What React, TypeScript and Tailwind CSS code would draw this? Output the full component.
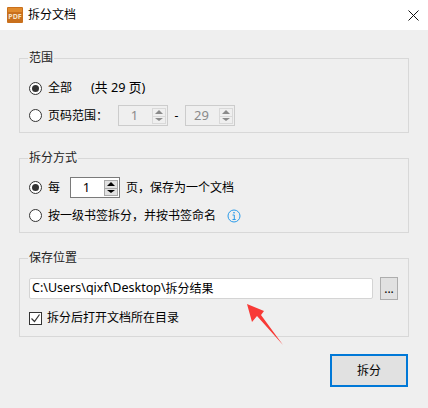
import React from 'react';

const FONT = "font-['Noto_Sans','Noto_Sans_CJK_SC',sans-serif]";
const COMMA = '\uFF0C';
const COLON = '\uFF1A';

const Radio = ({ checked }: { checked?: boolean }) => (
  <span className="flex h-[13px] w-[13px] shrink-0 items-center justify-center rounded-full border border-[#333] bg-white">
    {checked && <span className="h-[7px] w-[7px] rounded-full bg-[#333]" />}
  </span>
);

const Spinner = ({ value, disabled }: { value: string; disabled?: boolean }) => {
  const box = disabled ? 'border-[#ccc] bg-[#efefef] text-[#8a8a8a]' : 'border-[#7a7a7a] bg-white text-black';
  const btn = disabled ? 'border-[#d9d9d9] text-[#8a8a8a]' : 'border-[#a8a8a8] bg-[#e1e1e1] text-black';
  return (
    <div className={`flex h-[21px] w-[50px] items-center border pr-[1px] ${box}`}>
      <span className="flex-1 pr-[2px] text-center text-[13px] leading-none">{value}</span>
      <div className="flex w-[14px] flex-col">
        <span className={`flex h-[9px] items-center justify-center border ${btn}`}>
          <span className="h-0 w-0 border-x-[4px] border-b-[4px] border-x-transparent border-b-current" />
        </span>
        <span className={`-mt-px flex h-[8px] items-center justify-center border ${btn}`}>
          <span className="h-0 w-0 border-x-[4px] border-t-[3px] border-x-transparent border-t-current" />
        </span>
      </div>
    </div>
  );
};

const Group = ({ title, className, children }: { title: string; className: string; children: React.ReactNode }) => (
  <fieldset className={`mx-[19px] border border-[#d8d8d8] px-[9px] ${className}`}>
    <legend className="ml-[-1px] bg-[#efefef] px-[1px] text-[12px] leading-[16px] text-[#222]">{title}</legend>
    {children}
  </fieldset>
);

export default function App() {
  return (
    <div className={`relative flex h-[408px] w-[428px] flex-col overflow-hidden bg-[#efefef] text-[12px] text-black ${FONT}`}>
      {/* title bar */}
      <div className="flex h-[30px] items-center bg-white pl-[7px] pr-[9px]">
        <svg width="16" height="16" viewBox="0 0 16 16" className="shrink-0">
          <rect width="16" height="16" rx="1" fill="#c9701c" />
          <rect x="1" y="1" width="14" height="4" fill="#e08a2c" />
          <text x="8" y="12" textAnchor="middle" fontSize="7" fontWeight="700" fill="#f6e2c8">PDF</text>
        </svg>
        <span className="ml-[5px] flex-1 text-[12px]">拆分文档</span>
        <svg width="11" height="11" viewBox="0 0 11 11">
          <path d="M.5.5l10 10M10.5.5l-10 10" stroke="#111" strokeWidth="1" fill="none" />
        </svg>
      </div>

      <Group title="范围" className="mt-[20px] h-[83px]">
        <div className="mt-[12px] flex h-[20px] items-center gap-[6px]">
          <Radio checked />
          <span className="w-[37px]">全部</span>
          <span className="text-[12.75px]">(共 29 页)</span>
        </div>
        <div className="mt-[7px] flex h-[21px] items-center">
          <Radio />
          <span className="ml-[6px] w-[70px]">页码范围{COLON}</span>
          <Spinner value="1" disabled />
          <span className="w-[17px] text-center">-</span>
          <Spinner value="29" disabled />
        </div>
      </Group>

      <Group title="拆分方式" className="mt-[17px] h-[83px]">
        <div className="mt-[11px] flex h-[21px] items-center">
          <Radio checked />
          <span className="ml-[6px] w-[22px]">每</span>
          <Spinner value="1" />
          <span className="ml-[6px]">页{COMMA}保存为一个文档</span>
        </div>
        <div className="mt-[7px] flex h-[21px] items-center">
          <Radio />
          <span className="ml-[6px]">按一级书签拆分{COMMA}并按书签命名</span>
          <svg width="14" height="14" viewBox="0 0 14 14" className="ml-[11px]">
            <circle cx="7" cy="7" r="6" fill="none" stroke="#2a9bea" strokeWidth="1" />
            <rect x="6.3" y="3" width="1.4" height="1.4" fill="#2a9bea" />
            <path d="M5.5 6h1.8v4.5M5.5 10.5h3.2" fill="none" stroke="#2a9bea" strokeWidth="1" />
          </svg>
        </div>
      </Group>

      <Group title="保存位置" className="mt-[17px] h-[87px]">
        <div className="mt-[11px] flex items-center">
          <div className="flex h-[21px] w-[344px] items-center rounded-[2px] border border-[#d4d4d4] bg-white pl-[2px] text-[12.5px]">
            C:\Users\qixf\Desktop\<span className="text-[12px]">拆分结果</span>
          </div>
          <button className="ml-[7px] flex h-[23px] w-[18px] items-end justify-center border border-[#adadad] bg-[#e1e1e1] pb-[4px] text-[12px] leading-none">
            ...
          </button>
        </div>
        <div className="mt-[11px] flex h-[14px] items-center gap-[5px]">
          <span className="flex h-[13px] w-[13px] items-center justify-center border border-[#333] bg-white">
            <svg width="11" height="11" viewBox="0 0 11 11">
              <path d="M1.5 5.5l3 3 5-7" fill="none" stroke="#333" strokeWidth="1.2" />
            </svg>
          </span>
          <span>拆分后打开文档所在目录</span>
        </div>
      </Group>

      <div className="mt-[17px] flex justify-end pr-[20px]">
        <button className="h-[33px] w-[78px] border-2 border-[#0078d7] bg-[#e1e1e1] text-[12px]">拆分</button>
      </div>

      {/* red annotation arrow */}
      <svg width="40" height="44" viewBox="0 0 40 44" className="absolute left-[246px] top-[303px]">
        <polygon points="1,1 18,8 15,12 37,42 11,13 6,19" fill="#f83a36" />
      </svg>
    </div>
  );
}
